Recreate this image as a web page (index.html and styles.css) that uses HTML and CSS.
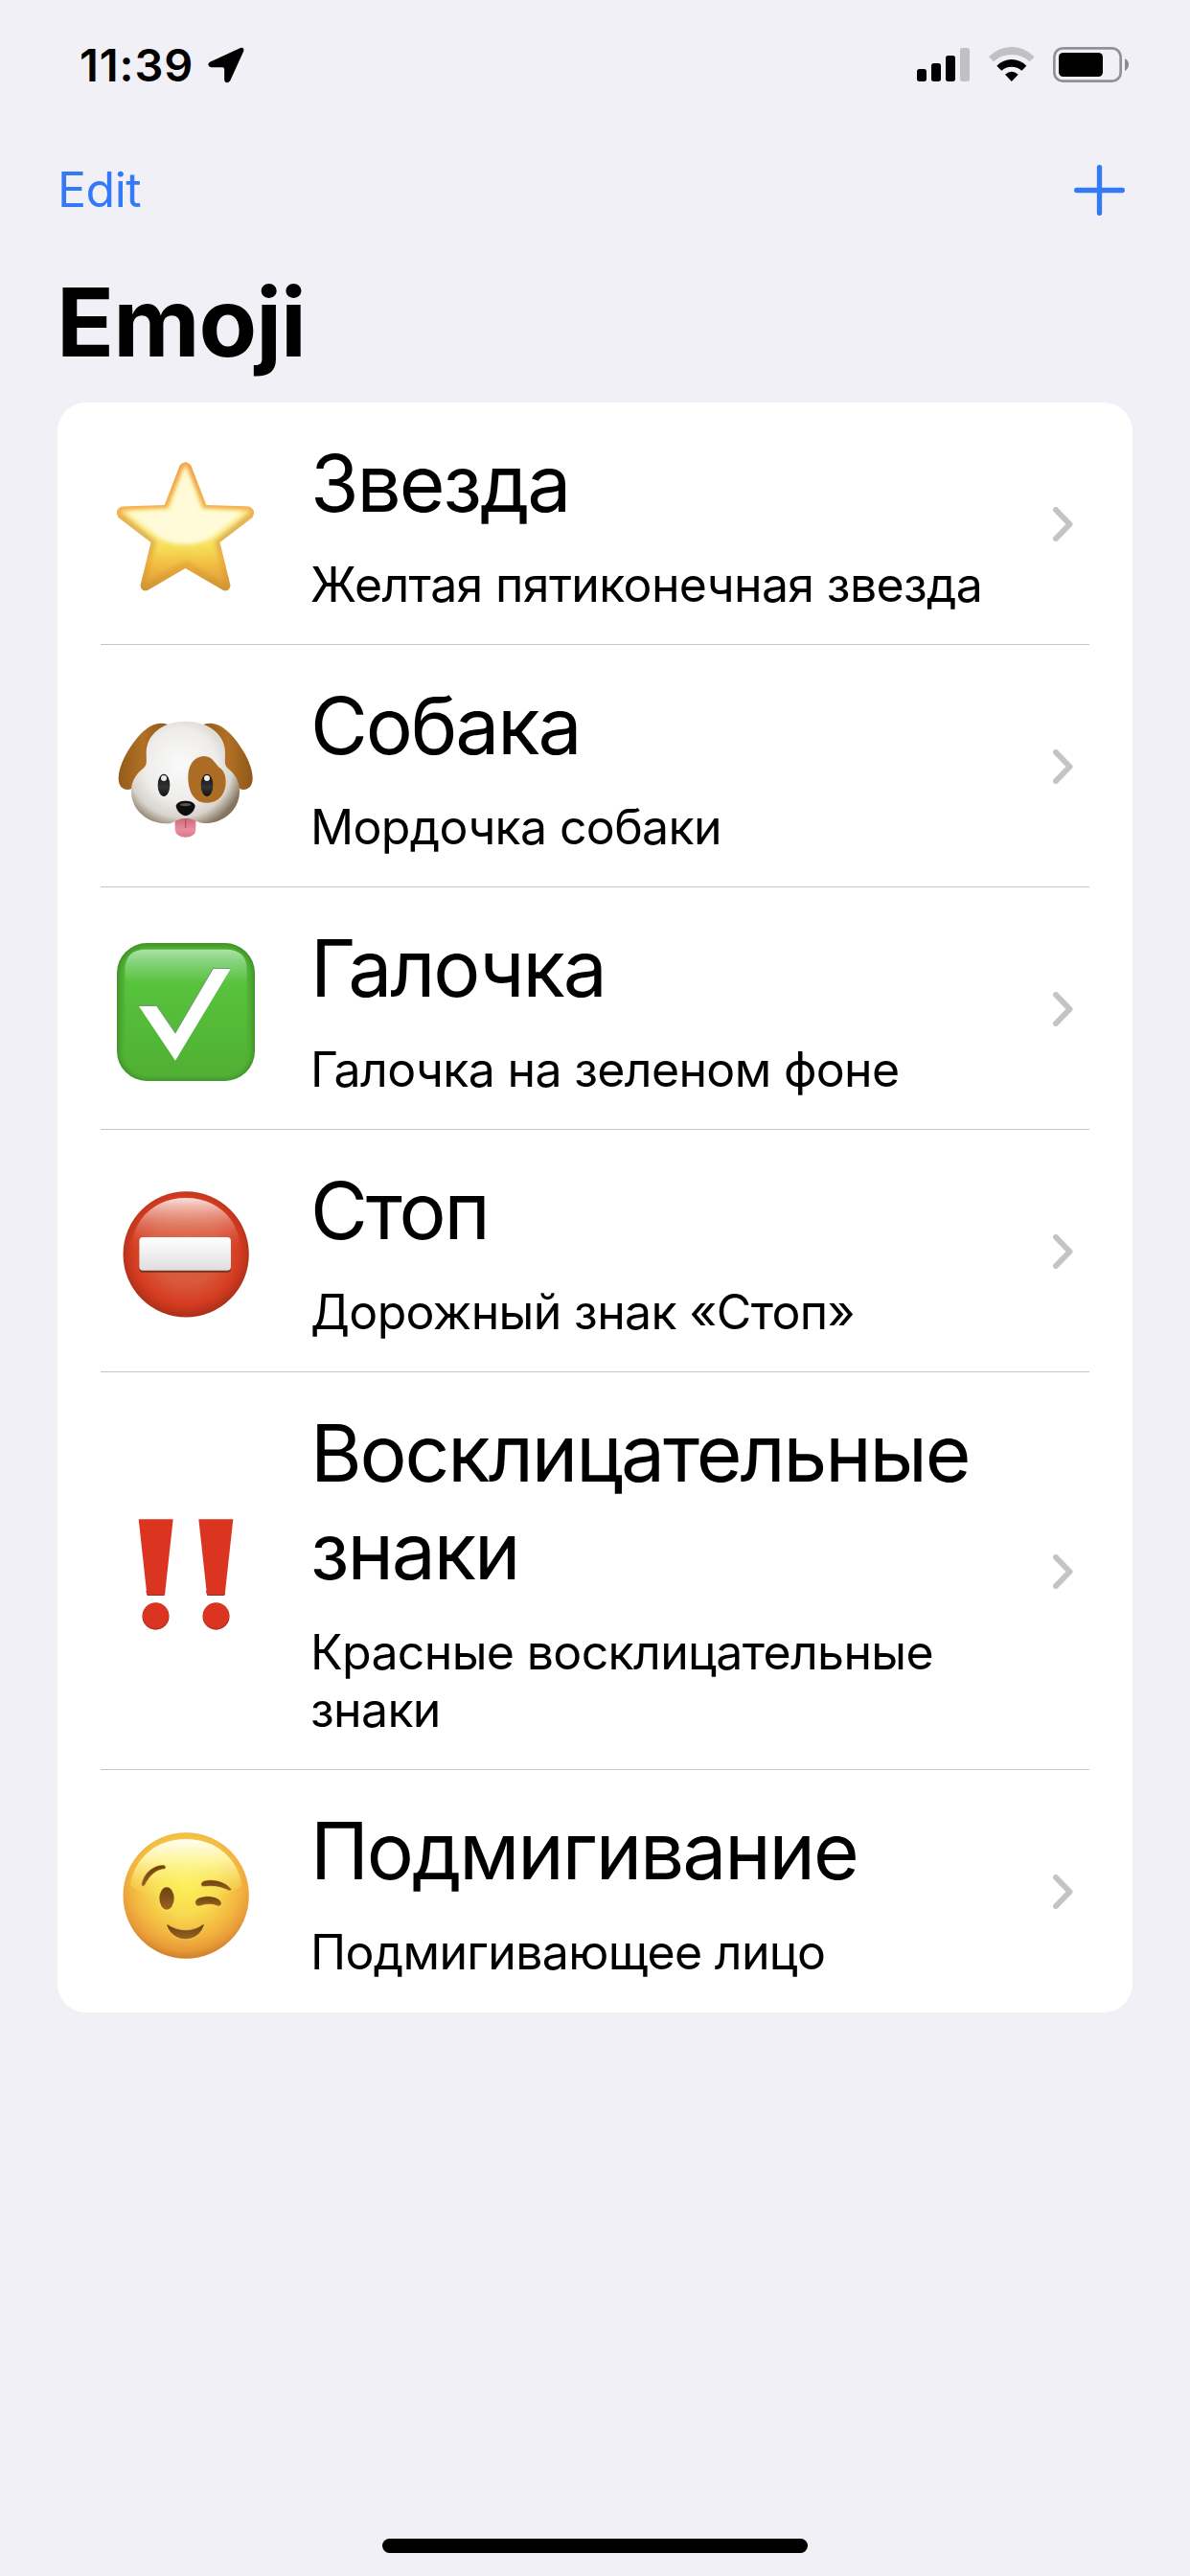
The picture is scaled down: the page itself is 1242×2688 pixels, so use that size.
FILE: index.html
```html
<!DOCTYPE html>
<html lang="ru">
<head>
<meta charset="utf-8">
<title>Emoji</title>
<link rel="stylesheet" href="styles.css">
</head>
<body>
<div class="status">
  <div class="status-left">
    <span class="time">11:39</span>
    <svg class="location" viewBox="470 89 113 113"><path d="M479 134 L571 92 Q583 89 581 102 L539 194 Q534 201 528 200 Q521 198 521 191 V158 Q521 152 515 152 H481 Q472 151 471 143 Q471 137 479 134Z"/></svg>
  </div>
  <div class="status-right">
    <svg class="signal" viewBox="111 87 165 111"><rect x="111" y="156" width="30" height="39" rx="8"/><rect x="156" y="138" width="30" height="57" rx="8"/><rect x="201" y="114" width="30" height="81" rx="8"/><rect x="246" y="90" width="30" height="105" rx="8" fill="#c1c0c5"/></svg>
    <svg class="wifi" viewBox="335 87 143 111"><path fill="#c1c0c5" d="M335 118 Q366 87 406.500 87 Q447 87 478 118 L463 133 Q439 111 406.500 111 Q374 111 350 133Z"/><path d="M360 146 Q380 126 406.500 126 Q433 126 453 146 L438 161 Q425 149 406.500 149 Q388 149 375 161Z"/><path d="M386 173 Q406.500 155 427 173 L406.500 195Z"/></svg>
    <svg class="battery" viewBox="537 87 237 111"><rect x="541" y="91" width="208" height="103" rx="27" fill="none" stroke="#919096" stroke-width="8"/><rect x="555" y="105" width="138" height="75" rx="14"/><path fill="#8b8a90" d="M762 123 Q774 130 774 142 Q774 155 762 162Z"/></svg>
  </div>
</div>
<div class="nav">
  <span class="edit">Edit</span>
  <svg class="plus" viewBox="0 0 53 53"><path d="M26.500 2.700V50.300M2.700 26.500H50.300"/></svg>
</div>
<h1 class="heading">Emoji</h1>
<div class="list">
  <div class="row">
    <svg class="emoji" viewBox="122 478 144 144">
      <defs>
        <linearGradient id="starBase" x1="0" y1="0" x2="0" y2="1"><stop offset="0" stop-color="#f0a048"/><stop offset=".36" stop-color="#f2b04c"/><stop offset=".55" stop-color="#dcb556"/><stop offset=".75" stop-color="#eeb03f"/><stop offset="1" stop-color="#cf9432"/></linearGradient>
        <linearGradient id="starIn" x1="0" y1="0" x2="0" y2="1"><stop offset="0" stop-color="#fff9cc"/><stop offset=".5" stop-color="#fbee90"/><stop offset=".7" stop-color="#f6df58"/><stop offset=".86" stop-color="#f0bb40"/><stop offset="1" stop-color="#e5a238"/></linearGradient>
        <filter id="starSoft" x="-20%" y="-20%" width="140%" height="140%"><feGaussianBlur stdDeviation="2.200"/></filter>
        <clipPath id="starClip"><path id="starPath" d="M187.500 486 Q193.500 478.500 199.500 486 L215.300 527 L260 528.500 Q268 532 263.500 540 L229.500 566 L240.500 611 Q239.500 618 233 616 L193.500 593 L154 616 Q147.500 618 146.500 611 L157.500 566 L123.500 540 Q119 532 127 528.500 L171.700 527Z"/></clipPath>
      </defs>
      <use href="#starPath" fill="url(#starBase)"/>
      <g clip-path="url(#starClip)">
        <path filter="url(#starSoft)" fill="url(#starIn)" d="M193.500 484 L212 531 L262 533 L224 565 L234 608 L193.500 584 L153 608 L163 565 L125 533 L175 531Z"/>
        <path filter="url(#starSoft)" d="M193.500 490 L210 532 L254 534 L220 562 Q193.500 574 167 562 L133 534 L177 532Z" fill="#fffbd8"/>
      </g>
    </svg>
    <div class="text"><div class="title">Звезда</div><div class="sub">Желтая пятиконечная звезда</div></div>
    <svg class="chevron" viewBox="0 0 21 36"><path d="M3 3L17.500 18L3 33"/></svg>
  </div>
  <div class="row">
    <svg class="emoji" viewBox="66 3 432 432">
      <defs>
        <radialGradient id="dogHead" gradientUnits="userSpaceOnUse" cx="265" cy="205" r="205"><stop offset="0" stop-color="#fafafa"/><stop offset=".55" stop-color="#eeedeb"/><stop offset=".8" stop-color="#d8d3cc"/><stop offset="1" stop-color="#857560"/></radialGradient>
        <linearGradient id="dogEar" x1="0" y1="0" x2="1" y2="0"><stop offset="0" stop-color="#935b1b"/><stop offset=".5" stop-color="#b17025"/><stop offset="1" stop-color="#8e5719"/></linearGradient>
        <linearGradient id="dogEye" x1="0" y1="0" x2="0" y2="1"><stop offset="0" stop-color="#111"/><stop offset=".6" stop-color="#333"/><stop offset="1" stop-color="#111"/></linearGradient>
        <linearGradient id="dogTongue" x1="0" y1="0" x2="0" y2="1"><stop offset="0" stop-color="#c96b7b"/><stop offset=".6" stop-color="#ea8d9e"/><stop offset="1" stop-color="#d77a8b"/></linearGradient>
      </defs>
      <path fill="url(#dogEar)" d="M225 78 C190 65 160 85 130 119 C100 155 72 205 71 245 C70 279 94 287 112 279 L160 205Z"/>
      <path fill="url(#dogEar)" d="M337 78 C372 65 402 85 432 119 C462 155 490 205 491 245 C492 279 468 287 450 279 L402 205Z"/>
      <path fill="url(#dogTongue)" d="M248 372 H313 V405 Q313 431 281 431 Q249 431 248 405Z"/>
      <path fill="url(#dogHead)" d="M281 68 C350 68 404 107 405 165 C405 195 401 205 415 217 C438 235 450 257 450 287 C450 347 398 388 340 387 C318 387 307 371 281 371 C255 371 244 390 222 388 C164 388 111 347 111 287 C111 257 124 235 147 217 C162 205 158 195 158 165 C159 107 212 68 281 68Z"/>
      <path fill="#ad6c23" d="M337 177 C368 176 372 203 392 217 C409 231 411 266 401 289 C389 316 364 326 341 323 C304 319 288 282 289 239 C290 207 306 179 337 177Z"/>
      <ellipse cx="213" cy="268" rx="19" ry="35" fill="url(#dogEye)"/><ellipse cx="348" cy="268" rx="19" ry="35" fill="url(#dogEye)"/>
      <ellipse cx="213" cy="246" rx="9" ry="9" fill="#eee"/><ellipse cx="348" cy="246" rx="9" ry="9" fill="#eee"/>
      <path fill="#0d0d0d" d="M251 332 C255 320 268 317 281 317 C294 317 307 320 311 332 C310 348 294 363 281 364 C268 363 252 348 251 332Z"/>
      <ellipse cx="281" cy="329" rx="17" ry="5" fill="#555"/>
      <path d="M281 373V402" stroke="#b85568" stroke-width="4" fill="none"/>
    </svg>
    <div class="text"><div class="title">Собака</div><div class="sub">Мордочка собаки</div></div>
    <svg class="chevron" viewBox="0 0 21 36"><path d="M3 3L17.500 18L3 33"/></svg>
  </div>
  <div class="row">
    <svg class="emoji" viewBox="66 72 432 432">
      <defs>
        <linearGradient id="checkIn" x1="0" y1="0" x2="0" y2="1"><stop offset="0" stop-color="#aae3a6"/><stop offset=".1" stop-color="#85d37c"/><stop offset=".27" stop-color="#58c33d"/><stop offset="1" stop-color="#50b032"/></linearGradient>
        <filter id="checkSoft" x="-10%" y="-10%" width="120%" height="120%"><feGaussianBlur stdDeviation="7"/></filter>
        <clipPath id="checkClip"><rect x="66" y="72" width="432" height="432" rx="94"/></clipPath>
      </defs>
      <g clip-path="url(#checkClip)">
        <rect x="66" y="72" width="432" height="432" fill="#3f922a"/>
        <rect x="74" y="82" width="416" height="415" rx="86" fill="#51b034" filter="url(#checkSoft)"/>
        <path d="M91 158 Q91 92 157 92 H407 Q473 92 473 158 V410 Q473 480 407 480 H157 Q91 480 91 410Z" fill="url(#checkIn)"/>
      </g>
      <path fill="#6f9b77" d="M133 266H191L249 351L366 150H423L420 155H368L249 358L190 271H137Z"/>
      <path fill="#fff" d="M135 270H190L249 356L368 153H422L249 440Z"/>
    </svg>
    <div class="text"><div class="title">Галочка</div><div class="sub">Галочка на зеленом фоне</div></div>
    <svg class="chevron" viewBox="0 0 21 36"><path d="M3 3L17.500 18L3 33"/></svg>
  </div>
  <div class="row">
    <svg class="emoji" viewBox="66 51 432 432">
      <defs>
        <radialGradient id="stopBase" gradientUnits="userSpaceOnUse" cx="282" cy="255" r="210"><stop offset="0" stop-color="#da6045"/><stop offset=".5" stop-color="#d8583b"/><stop offset=".8" stop-color="#d53c21"/><stop offset="1" stop-color="#a92f19"/></radialGradient>
        <linearGradient id="stopGloss" x1="0" y1="0" x2="0" y2="1"><stop offset="0" stop-color="#fff" stop-opacity=".85"/><stop offset=".35" stop-color="#f3c4b8" stop-opacity=".6"/><stop offset="1" stop-color="#e06a50" stop-opacity="0"/></linearGradient>
        <linearGradient id="stopBar" x1="0" y1="0" x2="0" y2="1"><stop offset="0" stop-color="#fff"/><stop offset="1" stop-color="#dedede"/></linearGradient>
      </defs>
      <circle cx="282.500" cy="266.500" r="197" fill="url(#stopBase)"/>
      <path fill="url(#stopGloss)" d="M112 245 C118 150 190 90 282 90 C374 90 446 150 452 245Z"/>
      <rect x="136" y="216" width="287" height="107" rx="12" fill="#7c3023"/>
      <rect x="136" y="213" width="287" height="104" rx="12" fill="url(#stopBar)"/>
    </svg>
    <div class="text"><div class="title">Стоп</div><div class="sub">Дорожный знак «Стоп»</div></div>
    <svg class="chevron" viewBox="0 0 21 36"><path d="M3 3L17.500 18L3 33"/></svg>
  </div>
  <div class="row">
    <svg class="emoji" viewBox="6 33 432 432">
      <g fill="#a02a1c"><path d="M97 300H157L155 315H101Z"/><path d="M285 300H345L343 315H289Z"/><circle cx="127.500" cy="380" r="42"/><circle cx="316.500" cy="380" r="42"/></g>
      <g fill="#db3522"><path d="M74 76H182L156 312H100Z"/><path d="M262 76H370L344 312H288Z"/><circle cx="127.500" cy="377.500" r="41"/><circle cx="316.500" cy="377.500" r="41"/></g>
    </svg>
    <div class="text"><div class="title">Восклицательные знаки</div><div class="sub">Красные восклицательные знаки</div></div>
    <svg class="chevron" viewBox="0 0 21 36"><path d="M3 3L17.500 18L3 33"/></svg>
  </div>
  <div class="row">
    <svg class="emoji" viewBox="66 45 432 432">
      <defs>
        <radialGradient id="faceBase" gradientUnits="userSpaceOnUse" cx="282" cy="225" r="240"><stop offset="0" stop-color="#fcf056"/><stop offset=".4" stop-color="#f8db50"/><stop offset=".72" stop-color="#f3b43f"/><stop offset=".88" stop-color="#e79a38"/><stop offset="1" stop-color="#c97b29"/></radialGradient>
        <linearGradient id="faceGloss" x1="0" y1="0" x2="0" y2="1"><stop offset="0" stop-color="#fffff4"/><stop offset=".35" stop-color="#fffbb0" stop-opacity=".85"/><stop offset="1" stop-color="#fbed54" stop-opacity="0"/></linearGradient>
        <linearGradient id="faceDark" x1="0" y1="0" x2="0" y2="1"><stop offset="0" stop-color="#6d3f10"/><stop offset="1" stop-color="#996322"/></linearGradient>
      </defs>
      <circle cx="282.500" cy="264" r="197" fill="url(#faceBase)"/>
      <path fill="url(#faceGloss)" d="M108 230 C122 145 190 87 282 87 C374 87 443 145 457 230 C410 290 155 290 108 230Z"/>
      <ellipse cx="222" cy="274" rx="25" ry="38" fill="#fbe75b"/><ellipse cx="222" cy="273" rx="23" ry="35" fill="url(#faceDark)"/>
      <g fill="url(#faceDark)" stroke="#fbe75b" stroke-width="2">
        <path d="M142 231 C146 198 178 167 212 168 Q221 170 219 178 Q216 182 207 182 C184 186 165 207 154 232 Q147 239 142 231Z"/>
        <path d="M329 230 Q329 218 347 216 C383 211 412 226 425 244 Q425 251 417 249 C389 236 367 233 342 236 Q330 237 329 230Z"/>
        <path d="M311 284 C314 270 334 266 354 266 C377 267 392 276 394 289 Q391 301 379 296 C363 290 345 290 325 297 Q312 299 311 284Z"/>
        <path d="M222 352 C259 378 305 378 338 352 Q341 353 338 361 C317 415 244 415 222 359Z"/>
      </g>
    </svg>
    <div class="text"><div class="title">Подмигивание</div><div class="sub">Подмигивающее лицо</div></div>
    <svg class="chevron" viewBox="0 0 21 36"><path d="M3 3L17.500 18L3 33"/></svg>
  </div>
</div>
<div class="home"></div>
</body>
</html>
```
FILE: styles.css
```css
* { box-sizing: border-box; }
body {
  margin: 0;
  height: 2688px;
  display: flex;
  flex-direction: column;
  background: #f1f0f6;
  color: #000;
  font-family: Inter, "Liberation Sans", sans-serif;
}
svg { display: block; flex: none; }
.status {
  display: flex;
  justify-content: space-between;
  align-items: center;
  height: 136px;
  padding: 0 64px 0 83px;
}
.status-left { display: flex; align-items: center; gap: 14px; }
.time { font-size: 47px; font-weight: 600; line-height: 60px; width: 120px; letter-spacing: 0.9px; }
.location { width: 38px; height: 38px; }
.status-right { display: flex; gap: 19.700px; margin-bottom: 1px; }
.signal { width: 55px; height: 37px; }
.wifi { width: 47.700px; height: 37px; }
.battery { width: 79px; height: 37px; }
.nav {
  display: flex;
  justify-content: space-between;
  align-items: center;
  height: 124px;
  padding: 0 68px 0 60px;
}
.edit { color: #347af7; font-size: 50px; line-height: 60px; letter-spacing: -0.5px; }
.plus { width: 53px; height: 53px; fill: none; stroke: #347af7; stroke-width: 5.300; stroke-linecap: round; }
.heading { margin: 0; height: 160px; padding: 14px 0 0 59px; font-size: 99px; line-height: 124px; font-weight: 700; letter-spacing: -1px; }
.list { margin: 0 60px; background: #fff; border-radius: 30px; }
.row {
  position: relative;
  display: flex;
  align-items: center;
  margin: 0 45px;
  padding: 34px 17px 33px;
}
.row + .row::before {
  content: "";
  position: absolute;
  inset: -1px 0 auto;
  height: 1px;
  background: #c6c6c8;
}
.emoji { width: 144px; height: 144px; position: relative; top: 3px; }
.text { flex: 1; min-width: 0; margin-left: 58px; padding-right: 30px; }
.title { font-size: 82px; line-height: 102px; margin-bottom: 24px; letter-spacing: -2.1px; }
.sub { font-size: 50px; line-height: 60px; letter-spacing: -0.65px; }
.chevron { width: 21px; height: 36px; fill: none; stroke: #c4c4c6; stroke-width: 6; stroke-linecap: round; stroke-linejoin: round; }
.home { width: 444px; height: 15px; margin: auto auto 24px; border-radius: 8px; background: #000; }
```
